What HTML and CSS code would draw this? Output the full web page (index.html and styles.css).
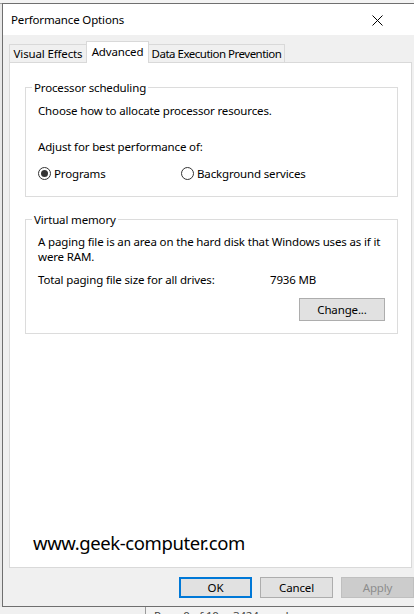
FILE: index.html
```html
<!DOCTYPE html>
<html lang="en">
<head>
  <meta charset="UTF-8">
  <meta name="viewport" content="width=device-width, initial-scale=1">
  <title>Performance Options</title>
  <link rel="stylesheet" href="styles.css">
</head>
<body>
  <div class="ribbon"></div>
  <div class="window">
    <div class="titlebar">
      <span class="title">Performance Options</span>
      <svg class="close" width="11" height="11" viewBox="0 0 11 11">
        <path d="M0.5 0.5 L10.5 10.5 M10.5 0.5 L0.5 10.5" stroke="#000" stroke-width="1" fill="none"/>
      </svg>
    </div>
    <div class="tabs">
      <div class="tab tab-ve">Visual Effects</div>
      <div class="tab tab-adv active">Advanced</div>
      <div class="tab tab-dep">Data Execution Prevention</div>
    </div>
    <div class="panel">
      <fieldset class="group group-cpu">
        <legend>Processor scheduling</legend>
        <p class="line">Choose how to allocate processor resources.</p>
        <p class="line adjust">Adjust for best performance of:</p>
        <div class="radios">
          <label class="radio radio-programs"><span class="dot checked"></span>Programs</label>
          <label class="radio"><span class="dot"></span>Background services</label>
        </div>
      </fieldset>
      <fieldset class="group group-vm">
        <legend>Virtual memory</legend>
        <p class="line paging">A paging file is an area on the hard disk that Windows uses as if it were RAM.</p>
        <div class="line total">
          <span class="total-label">Total paging file size for all drives:</span>
          <span>7936 MB</span>
        </div>
        <div class="change-row">
          <button class="btn btn-change">Change...</button>
        </div>
      </fieldset>
      <div class="watermark">www.geek-computer.com</div>
    </div>
    <div class="buttons">
      <button class="btn btn-ok">OK</button>
      <button class="btn">Cancel</button>
      <button class="btn btn-disabled">Apply</button>
    </div>
  </div>
  <div class="status">
    <div class="status-text">Page 0 of 10&nbsp;&nbsp;&nbsp;&nbsp;&nbsp;3424 words</div>
  </div>
</body>
</html>
```

FILE: styles.css
```css
/* Reset */
* { margin: 0; padding: 0; box-sizing: border-box; }
html, body {
  width: 414px;
  height: 614px;
  overflow: hidden;
}
body {
  background: #e8e8e8;
  font-family: "Segoe UI", "Noto Sans", "Open Sans", sans-serif;
  font-size: 11.5px;
  letter-spacing: -0.15px;
  color: #000;
}
.ribbon {
  height: 4px;
  background: #f3f3f3;
  border-bottom: 1px solid #a0a0a0;
}
.window {
  margin-left: 2px;
  margin-top: -1px;
  width: 414px;
  background: #f0f0f0;
  border: 1px solid #6f6f6f;
  border-right: none;
}
.titlebar {
  height: 31px;
  background: #fff;
  display: flex;
  align-items: center;
  padding: 1px 33px 0 8px;
}
.title {
  flex: 1;
  line-height: 16px;
}
.tabs {
  height: 27px;
  display: flex;
  align-items: flex-end;
  padding-left: 6px;
}
.tab {
  height: 18px;
  border: 1px solid #d9d9d9;
  border-bottom: none;
  background: #f0f0f0;
  text-align: center;
  line-height: 17px;
  margin-left: -1px;
  white-space: nowrap;
}
.tab-ve { width: 78px; margin-left: 0; }
.tab-adv { width: 63px; }
.tab-dep { width: 137px; letter-spacing: -0.5px; }
.tab.active {
  height: 22px;
  margin-bottom: -1px;
  background: #fff;
  position: relative;
  z-index: 1;
  line-height: 19px;
}
.panel {
  margin-left: 6px;
  width: 403px;
  height: 506px;
  background: #fff;
  border: 1px solid #d9d9d9;
  display: flex;
  flex-direction: column;
  padding: 17px 0 0 15px;
}
.group {
  width: 373px;
  border: 1px solid #dcdcdc;
  padding: 8px 12px 15px 12px;
}
.group legend {
  margin-left: -6px;
  padding: 0 2px;
  line-height: 15px;
}
.line {
  line-height: 15px;
}
.adjust { margin-top: 21px; }
.radios {
  margin-top: 12px;
  display: flex;
  line-height: 15px;
}
.radio {
  display: flex;
  align-items: center;
}
.radio-programs { width: 143px; }
.dot {
  width: 13px;
  height: 13px;
  border: 1px solid #333;
  border-radius: 50%;
  margin-right: 3px;
  display: flex;
  align-items: center;
  justify-content: center;
}
.dot.checked::after {
  content: "";
  width: 7px;
  height: 7px;
  border-radius: 50%;
  background: #333;
}
.group-vm {
  margin-top: 15px;
  padding: 7px 12px 12px 12px;
}
.paging { max-width: 346px; }
.total {
  margin-top: 8px;
  display: flex;
}
.total-label { width: 232px; }
.change-row {
  margin-top: 11px;
  display: flex;
  justify-content: flex-end;
}
.btn {
  font: inherit;
  letter-spacing: inherit;
  color: #000;
  width: 73px;
  height: 21px;
  background: #e1e1e1;
  border: 1px solid #adadad;
}
.btn-change {
  width: 86px;
  height: 23px;
}
.watermark {
  margin-top: auto;
  margin-bottom: 12px;
  margin-left: 8px;
  font-size: 18.5px;
  letter-spacing: -0.4px;
  line-height: 24px;
}
.buttons {
  height: 38px;
  display: flex;
  justify-content: flex-end;
  gap: 8px;
  padding: 9px 2px 0 0;
}
.btn-ok {
  border: 2px solid #0078d7;
}
.btn-disabled {
  background: #cccccc;
  border-color: #bfbfbf;
  color: #8d8d8d;
}
.status {
  height: 20px;
  padding-left: 145px;
  background: #f0f0f0;
}
.status-text {
  height: 20px;
  border-left: 1px solid #9a9a9a;
  background: #f3f3f3;
  padding: 1px 0 0 8px;
  color: #444;
}
```
